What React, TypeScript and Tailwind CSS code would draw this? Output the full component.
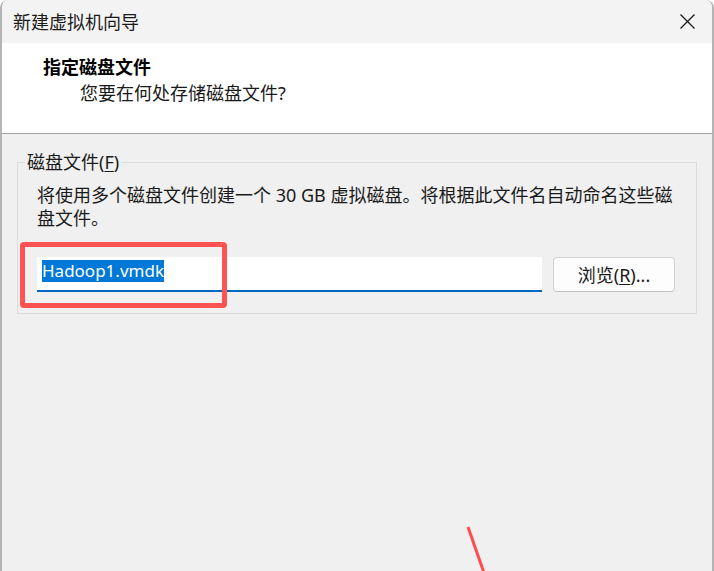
export default function App() {
  return (
    <div className="relative w-[714px] h-[571px] overflow-hidden bg-white font-['Noto_Sans','Noto_Sans_CJK_SC',sans-serif] text-[#000]">
      <div className="flex flex-col h-full border-x-2 border-[#b4b4b4] rounded-t-[8px] bg-[#f0f0f0] overflow-hidden">
        {/* title bar */}
        <div className="flex items-center justify-between h-[43px] shrink-0 bg-[#f3f3f3] pl-[11px] pr-[17px]">
          <span className="text-[18px] leading-[24px] text-[#1a1a1a]">新建虚拟机向导</span>
          <svg width="15" height="15" viewBox="0 0 15 15" className="text-[#1a1a1a]">
            <path d="M0.5 0.5L14.5 14.5M14.5 0.5L0.5 14.5" stroke="currentColor" strokeWidth="1.3" fill="none" />
          </svg>
        </div>

        {/* header */}
        <div className="h-[91px] shrink-0 bg-white border-b border-[#a0a0a0] pl-[41px] pt-[12px]">
          <div className="text-[18px] leading-[24px] font-bold">指定磁盘文件</div>
          <div className="text-[18px] leading-[24px] mt-[2px] pl-[37px] text-[#1a1a1a]">您要在何处存储磁盘文件?</div>
        </div>

        {/* body */}
        <div className="flex-1 px-[15px] pt-[16px]">
          <fieldset className="border border-[#dcdcdc] pl-[19px] pr-[16px] pt-[10px] pb-[21px]">
            <legend className="-ml-[12px] px-[2px] text-[18px] leading-[24px] text-[#1a1a1a]">
              磁盘文件(<span className="underline underline-offset-2">F</span>)
            </legend>
            <p className="text-[18px] leading-[23px] text-[#1a1a1a]">
              将使用多个磁盘文件创建一个 30 GB 虚拟磁盘。将根据此文件名自动命名这些磁
              <br />
              盘文件。
            </p>
            <div className="flex mt-[27px]">
              <div className="w-[505px] h-[35px] bg-white border-b-2 border-[#0067c0] pl-[5px] pt-[2px]">
                <span className="inline-block bg-[#0078d7] text-white text-[17px] leading-[22px]">Hadoop1.vmdk</span>
              </div>
              <button className="ml-[11px] w-[122px] h-[35px] rounded-[4px] border border-[#d0d0d0] border-b-[#c2c2c2] bg-[#fdfdfd] text-[18px] leading-[24px] text-[#1a1a1a]">
                浏览(<span className="underline underline-offset-2">R</span>)...
              </button>
            </div>
          </fieldset>
        </div>
      </div>

      {/* annotation overlays */}
      <div className="absolute left-[20px] top-[242px] w-[207px] h-[66px] border-[5px] border-[#ff5252] rounded-[4px]" />
      <svg className="absolute left-0 top-0" width="714" height="571">
        <line x1="468" y1="527" x2="490" y2="590" stroke="#ff4d4d" strokeWidth="3" />
      </svg>
    </div>
  )
}
